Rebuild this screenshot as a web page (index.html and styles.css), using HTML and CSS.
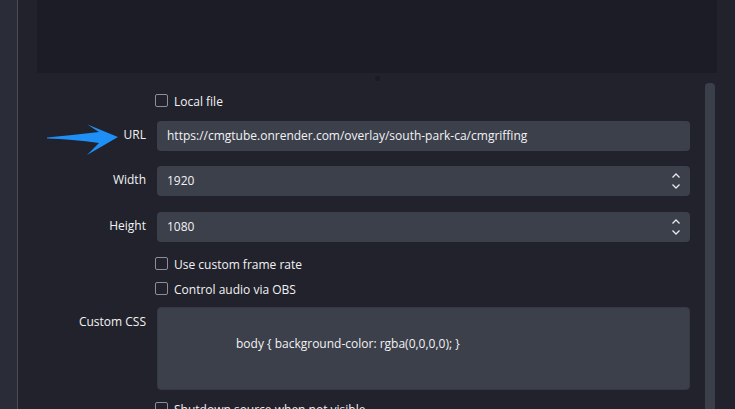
FILE: index.html
```html
<!DOCTYPE html>
<html>
<head>
<meta charset="utf-8">
<link rel="stylesheet" href="styles.css">
</head>
<body>
<div class="app">
  <div class="side"></div>
  <div class="main">
    <div class="preview"></div>
    <div class="splitter"><span class="dot"></span></div>
    <div class="body">
      <div class="form">
        <div class="row cb-row">
          <div class="label"></div>
          <label class="check"><span class="box"></span>Local file</label>
        </div>
        <div class="row input-row mb15">
          <div class="label url-label">URL
            <svg class="arrow" width="80" height="38" viewBox="0 0 80 38"><path d="M0 16.5 C16 15 34 13 52 11 C48 8.5 44 6 40.5 3.5 L71 16 L40 34 C44 30 48 26 52 22 C34 19.5 16 18 0 17.5 Z" fill="#1e8ff5"/></svg>
          </div>
          <div class="field">https://cmgtube.onrender.com/overlay/south-park-ca/cmgriffing</div>
        </div>
        <div class="row input-row mb16">
          <div class="label">Width</div>
          <div class="field spin">1920
            <svg class="chev" width="10" height="18" viewBox="0 0 10 18"><path d="M1.5 5.5 L5 2 L8.5 5.5 M1.5 12.5 L5 16 L8.5 12.5" fill="none" stroke="#e8e8ea" stroke-width="1.3"/></svg>
          </div>
        </div>
        <div class="row input-row mb15">
          <div class="label">Height</div>
          <div class="field spin">1080
            <svg class="chev" width="10" height="18" viewBox="0 0 10 18"><path d="M1.5 5.5 L5 2 L8.5 5.5 M1.5 12.5 L5 16 L8.5 12.5" fill="none" stroke="#e8e8ea" stroke-width="1.3"/></svg>
          </div>
        </div>
        <div class="row cb-row mb12">
          <div class="label"></div>
          <label class="check"><span class="box"></span>Use custom frame rate</label>
        </div>
        <div class="row cb-row mb12">
          <div class="label"></div>
          <label class="check"><span class="box"></span>Control audio via OBS</label>
        </div>
        <div class="row area-row mb12">
          <div class="label top">Custom CSS</div>
          <div class="area">body { background-color: rgba(0,0,0,0); }</div>
        </div>
        <div class="row cb-row">
          <div class="label"></div>
          <label class="check"><span class="box"></span>Shutdown source when not visible</label>
        </div>
      </div>
      <div class="scroll"><div class="thumb"></div></div>
    </div>
  </div>
</div>
</body>
</html>
```
FILE: styles.css
```css
html, body {
  margin: 0;
  padding: 0;
  width: 735px;
  height: 409px;
  overflow: hidden;
  background: #21222b;
  font-family: "Open Sans", "Noto Sans", sans-serif;
  font-size: 12px;
  color: #f2f2f4;
}
.app {
  display: flex;
  height: 409px;
}
.side {
  width: 17px;
  flex: none;
  background: #2a2d37;
  border-right: 1px solid #4a4c55;
}
.main {
  flex: 1;
  display: flex;
  flex-direction: column;
  background: #21222b;
  overflow: hidden;
}
.preview {
  margin-left: 19px;
  width: 680px;
  height: 73px;
  flex: none;
  background: #1b1c25;
}
.splitter {
  height: 0;
  position: relative;
}
.dot {
  position: absolute;
  left: 357px;
  top: 3px;
  width: 5px;
  height: 5px;
  border-radius: 50%;
  background: #1a1b23;
}
.body {
  display: flex;
  flex: 1;
  padding-top: 10px;
}
.form {
  flex: none;
  width: 672px;
  padding-top: 11px;
  display: flex;
  flex-direction: column;
}
.row {
  display: flex;
  align-items: center;
}
.cb-row {
  height: 13px;
  margin-bottom: 14px;
}
.mb12 { margin-bottom: 12px; }
.mb15 { margin-bottom: 15px; }
.mb16 { margin-bottom: 16px; }
.input-row { height: 30px; }
.input-row .label { padding-bottom: 4px; }
.area-row { align-items: flex-start; }
.label {
  width: 128px;
  flex: none;
  text-align: right;
  margin-right: 11px;
  white-space: nowrap;
}
.label.top { padding-top: 6px; }
.url-label { position: relative; }
.arrow {
  position: absolute;
  left: 29px;
  top: -5px;
}
.check {
  display: flex;
  align-items: center;
  white-space: nowrap;
  margin-left: -2px;
  padding-top: 1px;
}
.box {
  width: 11px;
  height: 11px;
  border: 1px solid #8d8f96;
  border-radius: 2px;
  margin-right: 6px;
  margin-top: -1px;
  flex: none;
}
.field {
  width: 533px;
  height: 30px;
  box-sizing: border-box;
  background: #3c404b;
  border-radius: 4px;
  padding-left: 10px;
  padding-bottom: 1px;
  display: flex;
  align-items: center;
  white-space: nowrap;
  position: relative;
}
.spin .chev {
  position: absolute;
  right: 9px;
  top: 6px;
}
.area {
  width: 533px;
  height: 83px;
  box-sizing: border-box;
  background: #3c404b;
  border: 1px solid #363943;
  border-radius: 4px;
  padding: 27px 0 0 78px;
  white-space: nowrap;
}
.scroll {
  margin-left: 15px;
  width: 10px;
  padding-top: 0;
}
.thumb {
  width: 10px;
  height: 340px;
  background: #3b3f4a;
  border-radius: 4px 4px 0 0;
}
```
